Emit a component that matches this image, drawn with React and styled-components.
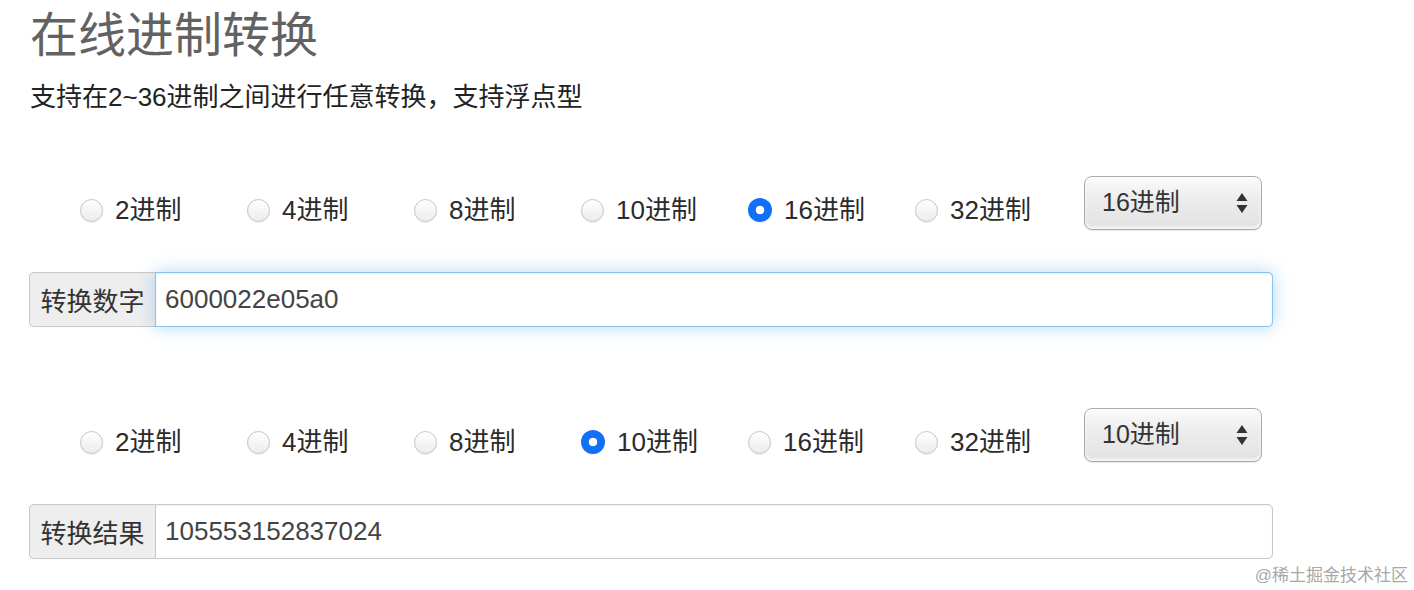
import React, { useState } from "react";
import styled, { createGlobalStyle } from "styled-components";

const BASES = [2, 4, 8, 10, 16, 32];

const GlobalStyle = createGlobalStyle`
  body {
    margin: 0;
    background: #fff;
    font-family: "Liberation Sans", "Noto Sans CJK SC", sans-serif;
    color: #333;
  }
`;

export default function App() {
  const [from, setFrom] = useState(16);
  const [to, setTo] = useState(10);
  const [value, setValue] = useState("6000022e05a0");

  return (
    <Page>
      <GlobalStyle />
      <Title>在线进制转换</Title>
      <Lead>支持在2~36进制之间进行任意转换，支持浮点型</Lead>

      <Section>
        <BaseRow>
          <RadioList>
            {BASES.map((b) => (
              <RadioItem key={b}>
                <Radio
                  type="radio"
                  name="from"
                  checked={from === b}
                  onChange={() => setFrom(b)}
                />
                {b}进制
              </RadioItem>
            ))}
          </RadioList>
          <SelectWrap>
            <Select value={from} onChange={(e) => setFrom(Number(e.target.value))}>
              {Array.from({ length: 35 }, (_, i) => i + 2).map((b) => (
                <option key={b} value={b}>
                  {b}进制
                </option>
              ))}
            </Select>
            <Arrows />
          </SelectWrap>
        </BaseRow>
        <InputGroup>
          <AddOn>转换数字</AddOn>
          <TextInput
            $focused
            value={value}
            onChange={(e) => setValue(e.target.value)}
          />
        </InputGroup>
      </Section>

      <Section $gap>
        <BaseRow>
          <RadioList>
            {BASES.map((b) => (
              <RadioItem key={b}>
                <Radio
                  type="radio"
                  name="to"
                  checked={to === b}
                  onChange={() => setTo(b)}
                />
                {b}进制
              </RadioItem>
            ))}
          </RadioList>
          <SelectWrap>
            <Select value={to} onChange={(e) => setTo(Number(e.target.value))}>
              {Array.from({ length: 35 }, (_, i) => i + 2).map((b) => (
                <option key={b} value={b}>
                  {b}进制
                </option>
              ))}
            </Select>
            <Arrows />
          </SelectWrap>
        </BaseRow>
        <InputGroup>
          <AddOn>转换结果</AddOn>
          <TextInput readOnly value="105553152837024" />
        </InputGroup>
      </Section>

      <Watermark>@稀土掘金技术社区</Watermark>
    </Page>
  );
}

function Arrows() {
  return (
    <ArrowIcon width="12" height="22" viewBox="0 0 12 22">
      <path d="M6 1 L11.5 9 H0.5 Z" fill="#333" />
      <path d="M6 21 L11.5 13 H0.5 Z" fill="#333" />
    </ArrowIcon>
  );
}

const Page = styled.div`
  position: relative;
  min-height: 590px;
  box-sizing: border-box;
  padding: 8px 0 0 29px;
`;

const Title = styled.h1`
  margin: 0 0 0 1px;
  font-size: 48px;
  line-height: 56px;
  font-weight: 400;
  color: #626262;
`;

const Lead = styled.p`
  margin: 15px 0 0 1px;
  font-size: 26px;
  line-height: 36px;
  color: #222;
`;

const Section = styled.section`
  width: 1244px;
  margin-top: ${(p) => (p.$gap ? "81px" : "61px")};
`;

const BaseRow = styled.div`
  display: flex;
  align-items: flex-start;
`;

const RadioList = styled.div`
  display: flex;
  padding: 20px 0 0 51px;
`;

const RadioItem = styled.label`
  width: 167px;
  display: flex;
  align-items: center;
  gap: 12px;
  font-size: 26px;
  line-height: 28px;
  color: #2b2b2b;
  cursor: pointer;
`;

const Radio = styled.input`
  appearance: none;
  margin: 0;
  width: 23px;
  height: 23px;
  border-radius: 50%;
  box-sizing: border-box;
  border: 1px solid #c4c4c4;
  background: linear-gradient(#ffffff, #ececec);
  box-shadow: 0 1px 1px rgba(0, 0, 0, 0.06);
  flex-shrink: 0;

  &:checked {
    width: 24px;
    height: 24px;
    border: none;
    background: radial-gradient(circle, #fff 0 4px, #1170f5 4.6px);
  }
`;

const SelectWrap = styled.div`
  position: relative;
  margin-left: 2px;
`;

const Select = styled.select`
  appearance: none;
  width: 178px;
  height: 54px;
  box-sizing: border-box;
  border: 1px solid #a9a9a9;
  border-radius: 8px;
  padding: 0 0 3px 17px;
  font-family: inherit;
  font-size: 25px;
  color: #333;
  background: linear-gradient(#fbfbfb, #ececec 45%, #e2e2e2);
  box-shadow: inset 0 1px 0 #fff, inset 0 -2px 3px rgba(255, 255, 255, 0.8),
    0 1px 1px rgba(0, 0, 0, 0.08);
  outline: none;
`;

const ArrowIcon = styled.svg`
  position: absolute;
  right: 14px;
  top: 16px;
  pointer-events: none;
`;

const InputGroup = styled.div`
  display: flex;
  margin-top: 42px;
  height: 55px;
`;

const AddOn = styled.span`
  width: 126px;
  box-sizing: border-box;
  display: flex;
  align-items: center;
  justify-content: center;
  background: #eeeeee;
  border: 1px solid #c8c8c8;
  border-right: none;
  border-radius: 5px 0 0 5px;
  font-size: 26px;
  color: #333;
`;

const TextInput = styled.input`
  flex: 1;
  margin: 0;
  box-sizing: border-box;
  padding: 0 9px;
  font-family: inherit;
  font-size: 26px;
  color: #444;
  border: 1px solid ${(p) => (p.$focused ? "rgba(82, 168, 236, 0.7)" : "#c8c8c8")};
  border-radius: 0 5px 5px 0;
  box-shadow: ${(p) =>
    p.$focused
      ? "inset 0 1px 2px rgba(0,0,0,.08), 0 0 18px rgba(82, 168, 236, 0.45)"
      : "inset 0 1px 2px rgba(0,0,0,.06)"};
  outline: none;
`;

const Watermark = styled.span`
  position: absolute;
  right: 6px;
  top: 564px;
  white-space: nowrap;
  font-size: 17px;
  line-height: 24px;
  color: #a8a8a8;
`;
